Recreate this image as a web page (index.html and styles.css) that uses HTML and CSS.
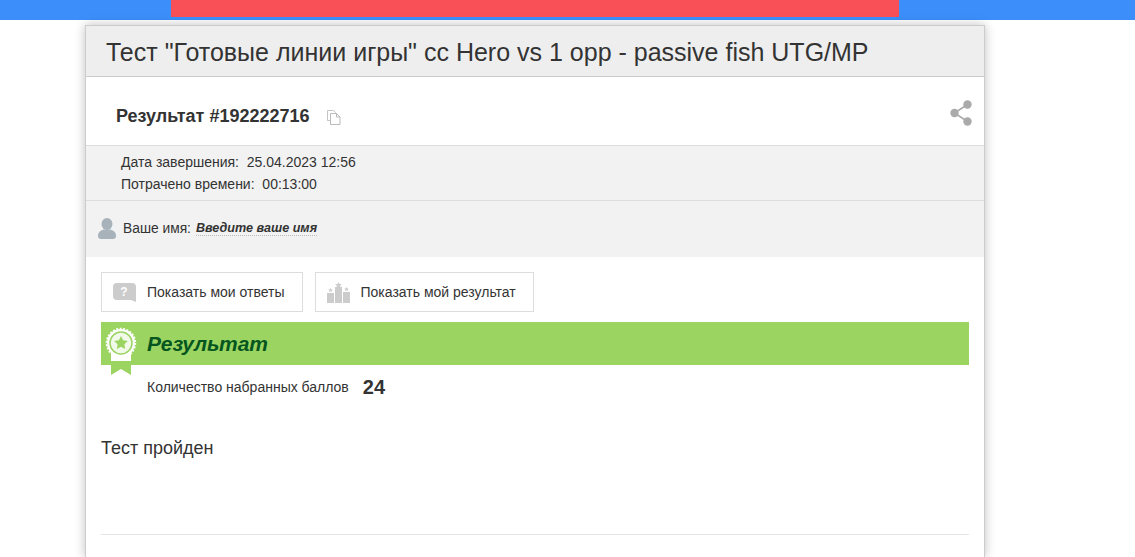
FILE: index.html
```html
<!DOCTYPE html>
<html>

<head>
    <meta http-equiv="Content-Type" content="text/html; charset=utf-8" />
    <title>Результат теста</title>
    <link rel="stylesheet" href="styles.css">
</head>

<body>
    <div class="topbar">
        <div class="topbar-alert"></div>
    </div>
    <div class="card">
        <h1 class="card-title">Тест "Готовые линии игры" сс Hero vs 1 opp - passive fish UTG/MP</h1>
        <div class="result-head">
            <span class="result-id">Результат #192222716</span>
            <svg class="copy-icon" width="14" height="15" viewBox="0 0 14 15">
                <path d="M.5 .5h6l2 2v8h-8z" fill="#fff" stroke="#c4c4c4" />
                <path d="M3.500 3.500h6l3.500 3.500v7.500H3.500z M9.500 3.500V7H13" fill="#fff" stroke="#bbb" />
            </svg>
            <svg class="share-icon" width="22" height="26" viewBox="0 0 22 26">
                <path d="M4.500 13L17.500 4.500M4.500 13l13 8.500" stroke="#aaa" stroke-width="1.500" fill="none" />
                <circle cx="4.500" cy="13" r="4.200" fill="#aaa" />
                <circle cx="17.500" cy="4.500" r="4.200" fill="#aaa" />
                <circle cx="17.500" cy="21.500" r="4.200" fill="#aaa" />
            </svg>
        </div>
        <div class="meta">
            <div class="meta-row">Дата завершения:&nbsp; 25.04.2023 12:56</div>
            <div class="meta-row">Потрачено времени:&nbsp; 00:13:00</div>
        </div>
        <div class="name-row">
            <svg class="user-icon" width="18" height="21" viewBox="0 0 18 21">
                <ellipse cx="9" cy="6" rx="5.500" ry="6" fill="#a7b2bb" />
                <path d="M0 18c0-4 3-6 6-6.500h6c3 .5 6 2.500 6 6.500 0 2-1 3-3 3H3c-2 0-3-1-3-3z" fill="#a7b2bb" />
            </svg>
            <span class="name-label">Ваше имя:</span>
            <span class="name-value">Введите ваше имя</span>
        </div>
        <div class="content">
            <div class="buttons">
                <a class="btn">
                    <svg width="23" height="19" viewBox="0 0 23 19">
                        <path d="M4 0h15a4 4 0 0 1 4 4v15l-5-2H4a4 4 0 0 1-4-4V4a4 4 0 0 1 4-4z" fill="#ccc" />
                        <text x="11" y="12.500" class="q-mark">?</text>
                    </svg>
                    Показать мои ответы
                </a>
                <a class="btn">
                    <svg width="23" height="21" viewBox="0 0 23 21">
                        <path d="M0 11h7v10H0zM8 5h7v16H8zM16 10h7v11h-7z" fill="#ccc" />
                        <path d="M11.500 0l1.100 2 2.200.3-1.600 1.500.4 2-2.100-1-2.100 1 .4-2-1.600-1.500 2.200-.3zM3.500 6l.8 1.400 1.500.2-1.100 1 .3 1.400-1.500-.7-1.500.7.3-1.400-1.100-1 1.500-.2zM19.500 5l.8 1.400 1.500.2-1.100 1 .3 1.400-1.500-.7-1.500.7.3-1.400-1.100-1 1.500-.2z" fill="#ccc" />
                    </svg>
                    Показать мой результат
                </a>
            </div>
            <div class="result-bar">
                <svg class="medal" width="32" height="54" viewBox="0 0 32 54">
                    <path d="M6 26h20v27l-10-6-10 6z" fill="#9bd461" />
                    <path d="M6 26h20v13H6z" fill="#fff" />
                    <circle cx="16" cy="21" r="14" fill="#fff" />
                    <circle cx="16" cy="21" r="14.500" fill="none" stroke="#fff" stroke-width="1.500" stroke-dasharray="2 1.500" />
                    <circle cx="16" cy="21" r="11" fill="#f1f9e8" stroke="#9bd461" stroke-width="1.500" />
                    <path d="M16 14l2.100 4.300 4.700.7-3.400 3.300.8 4.700-4.200-2.200-4.200 2.200.8-4.700L9.200 19l4.700-.7z" fill="#9bd461" />
                </svg>
                <span class="result-title">Результат</span>
            </div>
            <div class="score-row">
                <span>Количество набранных баллов</span>
                <span class="score">24</span>
            </div>
            <p class="passed">Тест пройден</p>
            <div class="divider"></div>
        </div>
    </div>
</body>

</html>
```
FILE: styles.css
```css
* {
    margin: 0;
    padding: 0;
    box-sizing: border-box;
}

html,
body {
    height: 557px;
    overflow: hidden;
}

body {
    background-color: #fff;
    color: #333;
    font-family: "Liberation Sans", Arial, sans-serif;
}

.topbar {
    height: 20px;
    padding-left: 171px;
    background-color: #3c8ffb;
}

.topbar-alert {
    width: 728px;
    height: 17px;
    background-color: #f95058;
}

.card {
    width: 900px;
    height: 532px;
    margin: 5px 0 0 85px;
    background-color: #fff;
    border: 1px solid #ccc;
    border-bottom: 0;
    box-shadow: 0 0 10px rgba(0, 0, 0, 0.25);
}

.card-title {
    height: 51px;
    padding: 11px 20px 0;
    background-color: #eee;
    border-bottom: 1px solid #ccc;
    font-size: 25px;
    font-weight: normal;
    line-height: 30px;
}

.result-head {
    display: flex;
    align-items: center;
    height: 69px;
    padding: 10px 12px 0 30px;
    border-bottom: 1px solid #ddd;
}

.result-id {
    font-size: 18px;
    font-weight: bold;
}

.copy-icon {
    margin: 2px 0 0 17px;
}

.share-icon {
    margin: 0 0 6px auto;
}

.meta {
    height: 55px;
    padding: 5px 0 0 35px;
    background-color: #f2f2f2;
    border-bottom: 1px solid #ddd;
    font-size: 14px;
}

.meta-row {
    height: 22px;
    line-height: 22px;
}

.name-row {
    display: flex;
    align-items: center;
    height: 56px;
    padding: 0 0 1px 12px;
    background-color: #f2f2f2;
    font-size: 14px;
}

.user-icon {
    margin-right: 7px;
}

.name-label {
    font-size: 13.800px;
}

.name-value {
    margin-left: 5px;
    border-bottom: 1px dotted #bbb;
    font-size: 12.600px;
    font-weight: bold;
    font-style: italic;
}

.content {
    padding: 15px 15px 0;
}

.buttons {
    display: flex;
    gap: 12px;
}

.btn {
    display: flex;
    align-items: center;
    gap: 11px;
    height: 40px;
    padding: 0 17px 0 11px;
    border: 1px solid #ddd;
    font-size: 14px;
}

.q-mark {
    fill: #fff;
    font-size: 12px;
    font-weight: bold;
    text-anchor: middle;
}

.result-bar {
    position: relative;
    height: 43px;
    margin-top: 10px;
    padding-left: 46px;
    background-color: #9bd461;
    line-height: 43px;
}

.medal {
    position: absolute;
    left: 4px;
    top: 0;
}

.result-title {
    color: #05561e;
    font-size: 21px;
    font-weight: bold;
    font-style: italic;
}

.score-row {
    display: flex;
    align-items: center;
    gap: 14px;
    height: 44px;
    padding-left: 46px;
    font-size: 14px;
}

.score {
    font-size: 20px;
    font-weight: bold;
}

.passed {
    margin-top: 28px;
    font-size: 18px;
    line-height: 22px;
}

.divider {
    margin-top: 75px;
    border-top: 1px solid #e5e5e5;
}
```
